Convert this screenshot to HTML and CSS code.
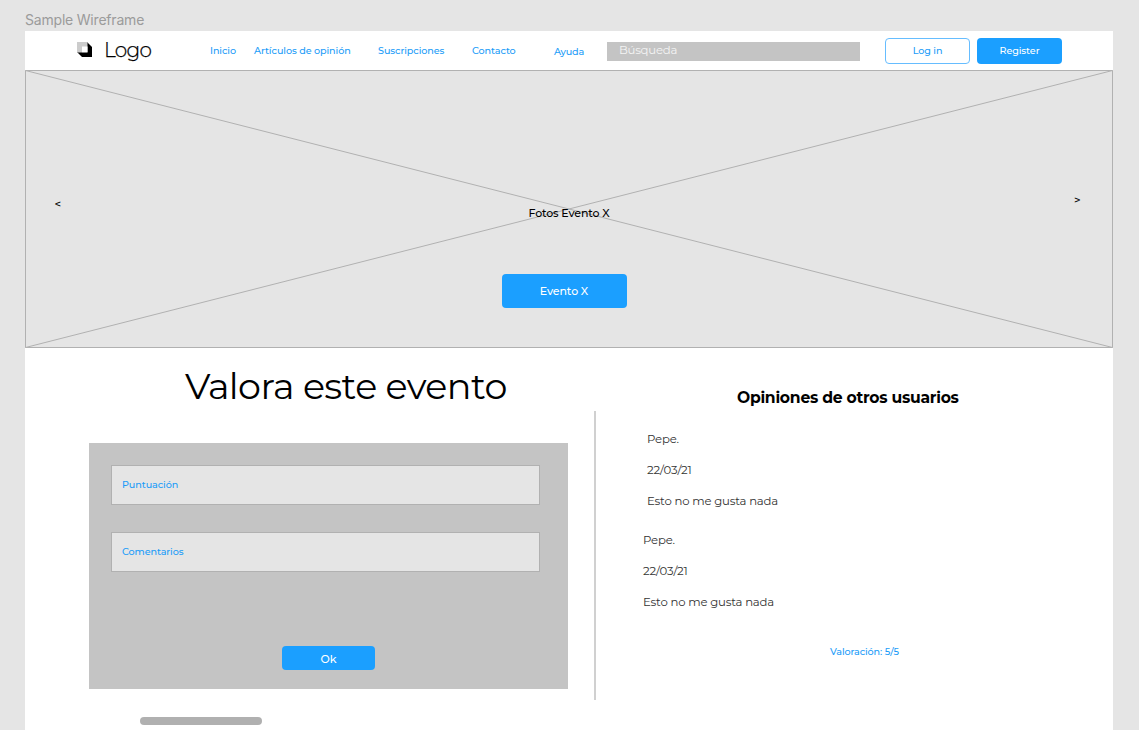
FILE: index.html
```
<!DOCTYPE html>
<html lang="es">
<head>
<meta charset="utf-8">
<title>Sample Wireframe</title>
<link rel="stylesheet" href="styles.css">
</head>
<body>
<div class="frame-label"><span>Sample Wireframe</span></div>
<main class="frame">
  <header class="topbar">
    <a class="brand">
      <svg class="brand-mark" width="15" height="15" viewBox="0 0 15 15"><path d="M0 10V0h10L15 5V15H5Z" fill="#000"/><path d="M0 0h10.500v10.500H0Z" fill="#ccc"/><path d="M5 4.500h5.500v5.700H5Z" fill="#fff"/></svg>
      <span class="brand-name">Logo</span>
    </a>
    <nav class="nav">
      <a class="nav-inicio"><span>Inicio</span></a>
      <a class="nav-articulos"><span>Artículos de opinión</span></a>
      <a class="nav-suscripciones"><span>Suscripciones</span></a>
      <a class="nav-contacto"><span>Contacto</span></a>
      <a class="nav-ayuda"><span>Ayuda</span></a>
    </nav>
    <div class="search"><span>Búsqueda</span></div>
    <button class="btn btn-outline login"><span>Log in</span></button>
    <button class="btn register"><span>Register</span></button>
  </header>
  <section class="hero">
    <svg class="hero-cross" width="1088" height="278" viewBox="0 0 1088 278"><path d="M.5.5h1087v277H.5ZM.5.500l1087 277M.5 277.500l1087-277" fill="none" stroke="#b1b1b1"/></svg>
    <span class="arrow prev">&lt;</span>
    <div class="hero-center">
      <span class="hero-title">Fotos Evento X</span>
      <button class="btn hero-btn"><span>Evento X</span></button>
    </div>
    <span class="arrow next">&gt;</span>
  </section>
  <section class="content">
    <div class="rate">
      <h1><span>Valora este evento</span></h1>
      <form class="rate-form">
        <div class="field"><span>Puntuación</span></div>
        <div class="field"><span>Comentarios</span></div>
        <button type="button" class="btn ok"><span>Ok</span></button>
      </form>
      <div class="scroll-thumb"></div>
    </div>
    <div class="divider"></div>
    <div class="reviews">
      <h2><span>Opiniones de otros usuarios</span></h2>
      <article class="review first"><p>Pepe.</p><p>22/03/21</p><p>Esto no me gusta nada</p></article>
      <article class="review"><p>Pepe.</p><p>22/03/21</p><p>Esto no me gusta nada</p></article>
      <div class="score"><span>Valoración: 5/5</span></div>
    </div>
  </section>
</main>
</body>
</html>
```
FILE: styles.css
```
* { box-sizing: border-box; }
body {
  margin: 0;
  height: 730px;
  overflow: hidden;
  background: #e5e5e5;
  color: #000;
  font-family: Montserrat, Inter, sans-serif;
  font-size: 9.6px;
  letter-spacing: -0.07px;
}
h1, h2, p { margin: 0; font-weight: 400; }
span { white-space: nowrap; }
.frame-label {
  height: 31px;
  padding: 11px 0 0 25px;
  color: #9b9b9b;
  font: 14px/18px Inter, sans-serif;
  letter-spacing: -0.2px;
}
.frame { width: 1088px; height: 699px; margin-left: 25px; background: #fff; }
.topbar { display: flex; align-items: flex-start; height: 39px; color: #1b9cf8; }
.brand { display: flex; width: 185px; padding: 11px 0 0 52px; color: #000; }
.brand-name { margin: -4px 0 0 12px; font-size: 20px; font-weight: 300; line-height: 24px; letter-spacing: -0.7px; -webkit-text-stroke: 0.25px #000; }
.nav { display: flex; width: 397px; padding-top: 13px; font-weight: 500; line-height: 14px; }
.nav-inicio { width: 44px; }
.nav-articulos { width: 124px; }
.nav-suscripciones { width: 94px; }
.nav-contacto { width: 82px; }
.nav-ayuda { padding-top: 0.5px; letter-spacing: -0.2px; }
.search { width: 253px; height: 19px; margin-top: 11px; padding-left: 12px; background: #c4c4c4; color: #f4f4f4; font-size: 11.700px; line-height: 17px; letter-spacing: -0.25px; }
.btn { display: flex; align-items: center; justify-content: center; padding: 0; border: 0; border-radius: 4px; background: #1b9fff; color: #fff; font: 500 9.600px/14px Montserrat, Inter, sans-serif; letter-spacing: -0.07px; }
.login, .register { width: 85px; height: 26px; margin-top: 7px; }
.btn-outline { margin-left: 25px; border: 1px solid #66bdff; background: #fff; color: #1b9cf8; }
.register { margin-left: 7px; }
.hero { position: relative; display: flex; justify-content: space-between; height: 278px; background: #e5e5e5; }
.hero-cross { position: absolute; inset: 0; }
.arrow { position: relative; width: 40px; font-size: 11.400px; font-weight: 500; line-height: 14px; }
.prev { padding: 127px 0 0 29.500px; }
.next { padding: 123px 0 0 1px; }
.hero-center { position: relative; display: flex; flex-direction: column; align-items: center; padding-top: 135px; }
.hero-title { font-size: 11px; font-weight: 500; line-height: 16px; letter-spacing: -0.12px; }
.hero-btn { width: 125px; height: 34px; margin: 53px 10px 0 0; font-size: 11px; letter-spacing: -0.1px; }
.content { display: flex; }
.rate { width: 569px; padding-left: 64px; }
h1 { height: 95px; padding: 14px 0 0 96px; font-size: 36.500px; font-weight: 400; line-height: 48px; letter-spacing: -0.58px; }
.rate-form { width: 479px; height: 246px; padding: 22px 28px 0 22px; background: #c4c4c4; }
.field { height: 40px; margin-bottom: 27px; padding: 12px 10px; border: 1px solid #b1b1b1; background: #e5e5e5; color: #1b9cf8; font-weight: 500; line-height: 14px; }
.ok { width: 93px; height: 24px; margin: 74px 0 0 171px; padding-top: 1px; font-size: 11px; }
.scroll-thumb { width: 122px; height: 8px; margin: 28px 0 0 51px; border-radius: 4px; background: #b0b0b0; }
.divider { width: 2px; height: 289px; margin-top: 63px; background: #d0d0d0; }
.reviews { flex: 1; padding: 40px 0 0 47px; }
h2 { height: 43px; padding-left: 94px; font-size: 15.600px; font-weight: 700; line-height: 20px; letter-spacing: -0.25px; }
.review { height: 101px; color: #333; font-size: 11.700px; line-height: 16px; letter-spacing: -0.18px; }
.review p { height: 31px; }
.first { padding-left: 4px; }
.score { padding: 12px 0 0 187px; color: #1b9cf8; font-weight: 500; line-height: 14px; }
```
